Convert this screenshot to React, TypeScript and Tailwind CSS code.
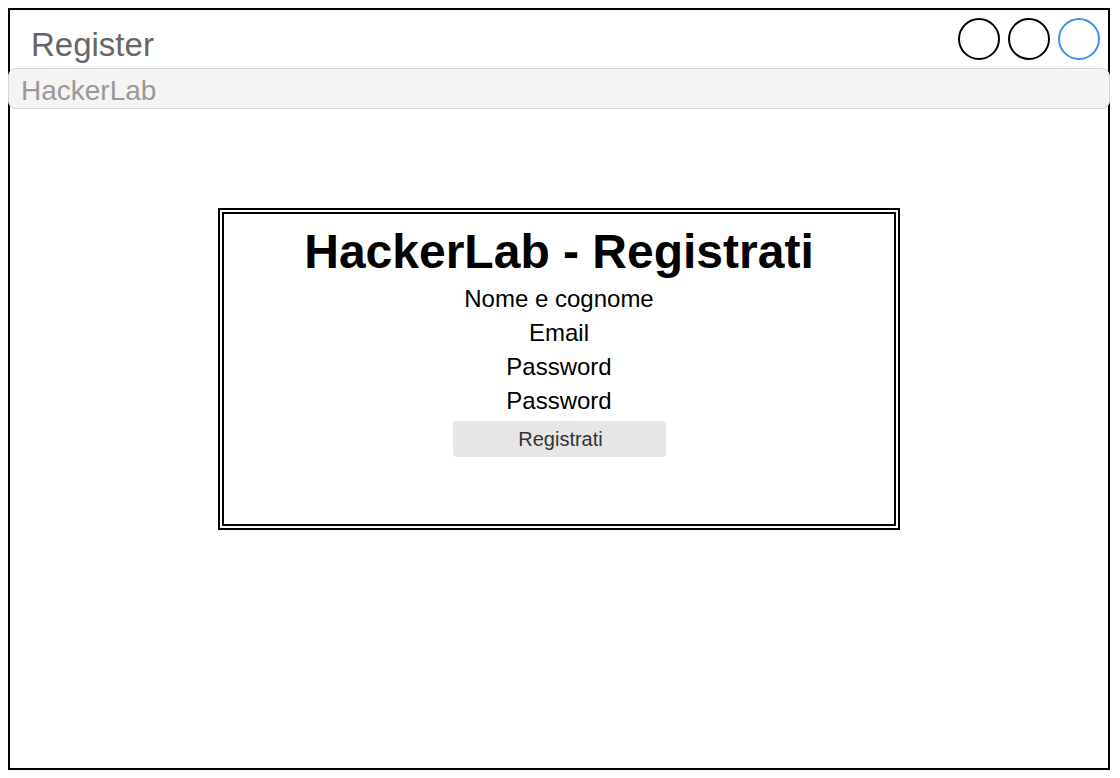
const fields = ["Nome e cognome", "Email", "Password", "Password"];

const Circle = ({ blue }: { blue?: boolean }) => (
  <div className={`h-[42px] w-[42px] rounded-full border-2 ${blue ? "border-[#3d8ff2]" : "border-black"}`} />
);

const App = () => {
  return (
    <div className="bg-white p-2 font-['Liberation_Sans',Arial,sans-serif]">
      <div className="flex h-[762px] w-[1102px] flex-col border-2 border-black bg-white">
        <div className="flex h-[58px] items-center justify-between pl-[21px] pr-[8px]">
          <h2 className="mt-[18px] self-start text-[33px] leading-none text-[#666666]">Register</h2>
          <div className="flex gap-2">
            <Circle />
            <Circle />
            <Circle blue />
          </div>
        </div>
        <div className="-mx-[2px] flex h-[41px] items-start rounded-lg border border-[#d6d6d6] bg-[#f4f4f4] pl-[12px] pt-[8px]">
          <span className="text-[28px] leading-none text-[#999999]">HackerLab</span>
        </div>

        <div className="mx-auto mt-[99px] flex h-[322px] w-[682px] flex-col items-center border-[6px] border-double border-black pt-[10px]">
          <h1 className="mb-[3px] text-[48px] font-bold leading-[55px] text-black">HackerLab - Registrati</h1>
          {fields.map((f, i) => (
            <div key={i} className="text-[24px] leading-[34px] text-black">
              {f}
            </div>
          ))}
          <button className="mt-[3px] h-[36px] w-[213px] rounded-[4px] bg-[#e6e6e6] pl-[3px] text-[20px] text-[#333333]">Registrati</button>
        </div>
      </div>
    </div>
  );
};

export default App;
